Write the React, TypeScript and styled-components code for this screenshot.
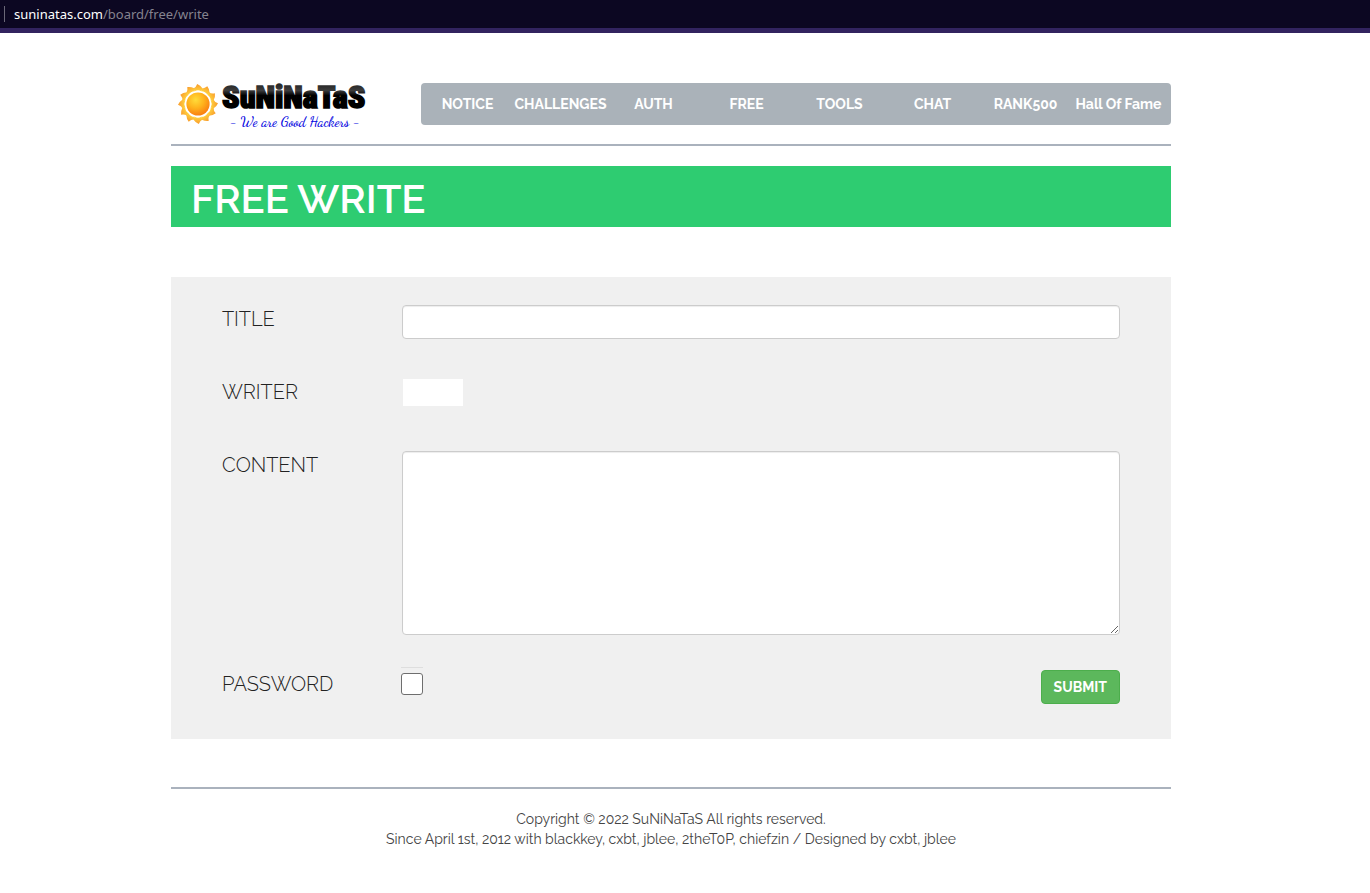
import React from "react";
import styled, { createGlobalStyle } from "styled-components";

const GlobalStyle = createGlobalStyle`
  *, *::before, *::after { box-sizing: border-box; }
  body {
    margin: 0;
    background: #fff;
    color: #333;
    font-family: Raleway, Lato, "Open Sans", sans-serif;
    font-size: 14px;
    line-height: 20px;
  }
`;

const AddressBar = styled.div`
  display: flex;
  align-items: center;
  height: 33px;
  padding-left: 4px;
  background: #0c0722;
  border-bottom: 5px solid #32235f;
  font-family: "Noto Sans", sans-serif;
  font-size: 13px;
  color: #85838f;
`;

const Divider = styled.span`
  width: 1px;
  height: 16px;
  margin-right: 9px;
  background: #6b6878;
`;

const Host = styled.span`
  color: #fff;
`;

const Page = styled.div`
  padding: 50px 28px 44px 0;
`;

const Container = styled.div`
  width: 100%;
  max-width: 1000px;
  margin: 0 auto;
`;

const Header = styled.header`
  display: flex;
  align-items: flex-start;
  justify-content: space-between;
  height: 63px;
  border-bottom: 2px solid #aab2bd;
`;

const LogoLink = styled.a`
  display: block;
  height: 52px;
`;

const LogoArt = styled.svg`
  display: block;
  overflow: visible;
`;

const Nav = styled.nav`
  display: grid;
  grid-template-columns: repeat(8, minmax(0, 1fr));
  align-items: center;
  flex: 0 1 750px;
  height: 42px;
  padding-right: 6px;
  background: #aab2b9;
  border-radius: 4px;
`;

const NavLink = styled.a`
  color: #fff;
  font-weight: 700;
  text-align: center;
  text-decoration: none;
  white-space: nowrap;
`;

const Banner = styled.h1`
  margin: 20px 0 50px;
  padding: 3px 20px 0;
  height: 61px;
  background: #2ecc71;
  color: #fff;
  font-size: 40px;
  font-weight: 600;
  line-height: 60px;
`;

const Form = styled.form`
  display: flex;
  flex-direction: column;
  padding: 28px 51px 35px;
  background: #f0f0f0;
`;

const Row = styled.div<{ $gap?: number }>`
  display: grid;
  grid-template-columns: 180px 1fr;
  align-items: start;
  margin-bottom: ${(p) => p.$gap ?? 0}px;
`;

const Label = styled.label`
  color: #222;
  font-size: 20px;
  font-weight: 300;
  line-height: 28px;
`;

const TextInput = styled.input`
  width: 100%;
  height: 34px;
  padding: 6px 12px;
  border: 1px solid #ccc;
  border-radius: 4px;
  background: #fff;
  box-shadow: inset 0 1px 1px rgba(0, 0, 0, 0.075);
  font: inherit;
`;

const WriterInput = styled.input`
  width: 60px;
  height: 27px;
  margin: 1px;
  border: 0;
  background: #fff;
  font: inherit;
`;

const TextArea = styled.textarea`
  display: block;
  width: 100%;
  height: 184px;
  padding: 6px 12px;
  border: 1px solid #ccc;
  border-radius: 4px;
  background: #fff;
  box-shadow: inset 0 1px 1px rgba(0, 0, 0, 0.075);
  font: inherit;
`;

const Actions = styled.div`
  display: flex;
  align-items: flex-start;
  justify-content: space-between;
`;

const CheckSlot = styled.span`
  display: flex;
  margin: -3px 0 0 -1px;
  padding-top: 5px;
  border-top: 1px solid #dedede;
`;

const Checkbox = styled.input`
  appearance: none;
  width: 22px;
  height: 22px;
  margin: 0;
  border: 1px solid #6e6e6e;
  border-radius: 3px;
  background: #fff;

  &:checked { background: #5cb85c; }
`;

const SubmitButton = styled.button`
  height: 34px;
  padding: 0 12px;
  border: 1px solid #4cae4c;
  border-radius: 4px;
  background: #5cb85c;
  color: #fff;
  font: inherit;
  font-weight: 700;
`;

const Footer = styled.footer`
  margin-top: 48px;
  padding-top: 20px;
  border-top: 2px solid #aab2bd;
  color: #444;
  text-align: center;

  p { margin: 0; }
`;

const links = ["NOTICE", "CHALLENGES", "AUTH", "FREE", "TOOLS", "CHAT", "RANK500", "Hall Of Fame"];

const rays = Array.from({ length: 12 }, (_, i) => i * 30);

function Logo() {
  return (
    <LogoArt width="204" height="52" viewBox="0 0 204 52" role="img" aria-label="SuNiNaTaS">
      <defs>
        <radialGradient id="sun" cx="40%" cy="32%" r="72%">
          <stop offset="0" stopColor="#ffdc3a" />
          <stop offset="0.5" stopColor="#ffb21c" />
          <stop offset="1" stopColor="#f97a10" />
        </radialGradient>
        <linearGradient id="ray" x1="0" y1="-20" x2="0" y2="-13" gradientUnits="userSpaceOnUse">
          <stop offset="0" stopColor="#f99b2c" />
          <stop offset="1" stopColor="#ffd23f" />
        </linearGradient>
        <linearGradient id="letters" x1="0" y1="0" x2="0" y2="25" gradientUnits="userSpaceOnUse">
          <stop offset="0" stopColor="#222" />
          <stop offset="0.3" stopColor="#3c3c3c" />
          <stop offset="0.5" stopColor="#000" />
        </linearGradient>
      </defs>
      <g transform="translate(27 21)">
        {rays.map((angle) => (
          <path
            key={angle}
            d="M-4.6 -15.4 Q-2 -16.6 -0.8 -20 Q2.4 -18.8 4.6 -15.4 L3.4 -12.8 Q0 -14.6 -3.4 -12.8Z"
            fill="url(#ray)"
            transform={`rotate(${angle})`}
          />
        ))}
        <circle r="11.6" fill="url(#sun)" />
      </g>
      <text
        x="51"
        y="25"
        fontFamily="'Roboto Condensed', Oswald, sans-serif"
        fontSize="32"
        fontWeight="900"
        fill="url(#letters)"
        stroke="url(#letters)"
        strokeWidth="1.6"
      >
        SuNiNaTaS
      </text>
      <text
        x="59"
        y="43"
        fontFamily="'Dancing Script', 'Liberation Serif', serif"
        fontSize="14"
        fontWeight="500"
        fill="#0000e0"
      >
        - We are Good Hackers -
      </text>
    </LogoArt>
  );
}

export default function App() {
  return (
    <>
      <GlobalStyle />
      <AddressBar>
        <Divider />
        <Host>suninatas.com</Host>/board/free/write
      </AddressBar>
      <Page>
        <Container>
          <Header>
            <LogoLink href="#"><Logo /></LogoLink>
            <Nav>
              {links.map((name) => (
                <NavLink key={name} href="#">{name}</NavLink>
              ))}
            </Nav>
          </Header>
          <main>
            <Banner>FREE WRITE</Banner>
            <Form onSubmit={(e) => e.preventDefault()}>
              <Row $gap={39}>
                <Label htmlFor="title">TITLE</Label>
                <TextInput id="title" type="text" />
              </Row>
              <Row $gap={44}>
                <Label htmlFor="writer">WRITER</Label>
                <WriterInput id="writer" type="text" />
              </Row>
              <Row $gap={35}>
                <Label htmlFor="content">CONTENT</Label>
                <TextArea id="content" />
              </Row>
              <Row>
                <Label htmlFor="password">PASSWORD</Label>
                <Actions>
                  <CheckSlot><Checkbox id="password" type="checkbox" /></CheckSlot>
                  <SubmitButton type="submit">SUBMIT</SubmitButton>
                </Actions>
              </Row>
            </Form>
          </main>
          <Footer>
            <p>Copyright © 2022 SuNiNaTaS All rights reserved.</p>
            <p>Since April 1st, 2012 with blackkey, cxbt, jblee, 2theT0P, chiefzin / Designed by cxbt, jblee</p>
          </Footer>
        </Container>
      </Page>
    </>
  );
}
